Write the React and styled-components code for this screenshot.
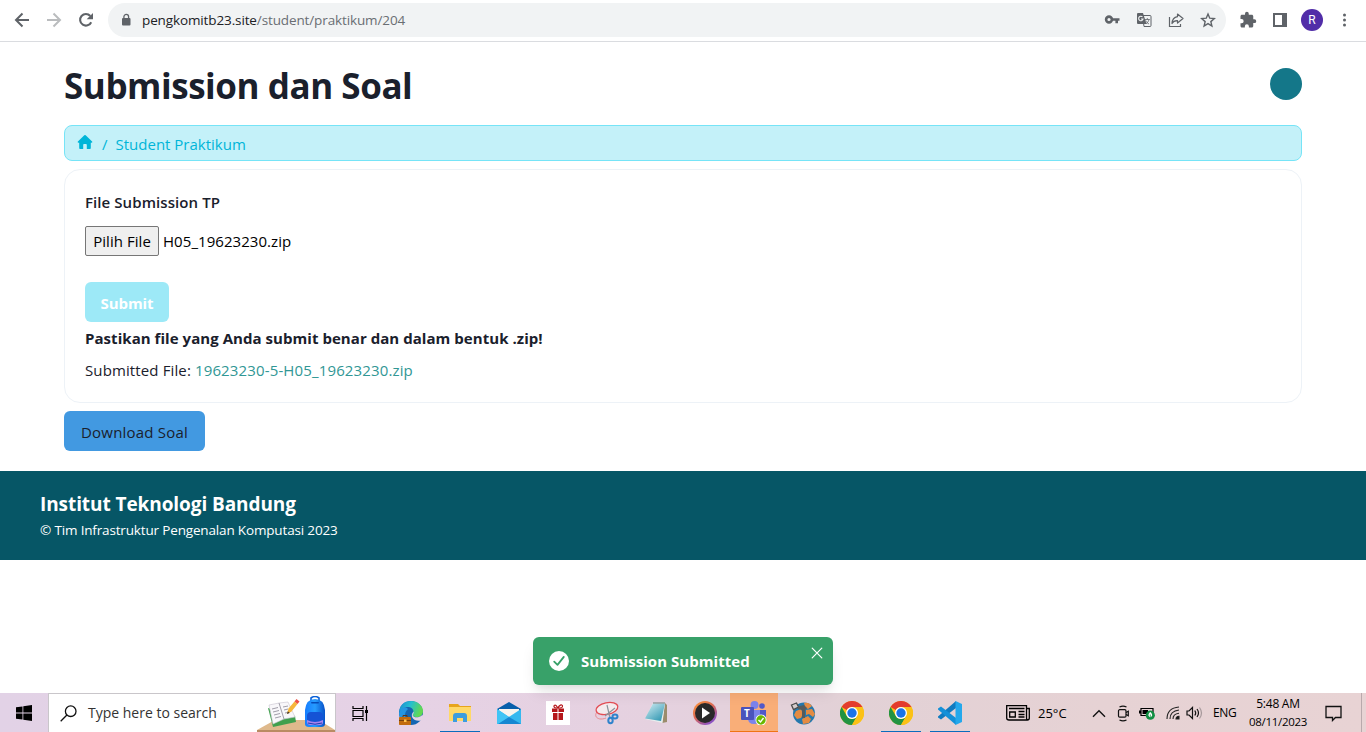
import React from "react";
import styled, { createGlobalStyle } from "styled-components";

const GlobalStyle = createGlobalStyle`
  * { box-sizing: border-box; }
  html, body { margin: 0; height: 732px; overflow: hidden; background: #fff; }
  body { font-family: "Open Sans", "Noto Sans", sans-serif; color: #1a202c; }
  svg { display: block; flex: none; }
`;

const Screen = styled.div`
  position: relative;
  width: 1366px;
  height: 732px;
  display: flex;
  flex-direction: column;
`;

const Text = styled.span`
  font-size: ${(p) => p.$size || 15}px;
  font-weight: ${(p) => p.$weight || 400};
  letter-spacing: ${(p) => p.$track || 0}px;
  color: ${(p) => p.$color || "inherit"};
  line-height: ${(p) => p.$line || 24}px;
  white-space: pre;
`;

const Toolbar = styled.header`
  height: 42px;
  flex: none;
  display: flex;
  align-items: center;
  padding: 0 13px 2px 14px;
  border-bottom: 1px solid #dadce0;
`;
const NavButtons = styled.div`
  display: flex;
  gap: 16px;
  width: 94px;
`;
const AddressBar = styled.div`
  width: 1118px;
  height: 34px;
  border-radius: 17px;
  background: #f1f3f4;
  display: flex;
  align-items: center;
  padding: 0 10px 0 12px;
`;
const Url = styled.div`
  flex: 1;
  display: flex;
  padding-left: 10px;
`;
const AddressActions = styled.div`
  display: flex;
  align-items: center;
  gap: 16px;
`;
const BrowserActions = styled.div`
  flex: 1;
  display: flex;
  align-items: center;
  padding-left: 13px;
`;
const Avatar = styled.div`
  width: 22px;
  height: 22px;
  margin: 0 12px 0 14px;
  border-radius: 50%;
  background: #512da8;
  color: #fff;
  font: 12px/22px Roboto, sans-serif;
  text-align: center;
`;

const Main = styled.main`
  flex: none;
  height: 429px;
  padding: 19px 64px 0;
  display: flex;
  flex-direction: column;
  align-items: flex-start;
`;
const TitleRow = styled.div`
  width: 100%;
  height: 64px;
  display: flex;
  justify-content: space-between;
`;
const Title = styled(Text).attrs({ as: "h1" })`
  margin: 0;
`;
const UserDot = styled.div`
  width: 32px;
  height: 32px;
  margin-top: 7px;
  border-radius: 50%;
  background: #147789;
`;
const Breadcrumb = styled.nav`
  width: 100%;
  height: 36px;
  border: 1px solid #76e4f7;
  border-radius: 8px;
  background: #c4f1f9;
  color: #00b5d8;
  display: flex;
  align-items: center;
  padding: 2px 12px 0;
`;
const Crumb = styled.div`
  display: flex;
  padding-bottom: ${(p) => p.$lift || 0}px;
  padding-right: ${(p) => p.$gap || 0}px;
`;
const Card = styled.section`
  width: 100%;
  height: 234px;
  margin: 8px 0;
  padding: 20px;
  border: 1px solid #edf2f7;
  border-radius: 16px;
  display: flex;
  flex-direction: column;
  align-items: flex-start;
`;
const FileRow = styled.div`
  display: flex;
  align-items: center;
  gap: 4px;
  margin: 12px 0 26px;
  color: #000;
`;
const FileButton = styled.div`
  width: 74px;
  height: 30px;
  border: 1px solid #767676;
  border-radius: 2px;
  background: #efefef;
  display: flex;
  align-items: center;
  justify-content: center;
`;
const Button = styled.div`
  width: ${(p) => p.$width}px;
  height: 40px;
  flex: none;
  border-radius: 6px;
  background: ${(p) => p.$bg};
  display: flex;
  align-items: center;
  justify-content: center;
  padding-top: 2px;
`;
const Line = styled.div`
  height: 24px;
  display: flex;
  align-items: center;
  margin-top: ${(p) => p.$top || 0}px;
`;
const Footer = styled.footer`
  height: 89px;
  flex: none;
  background: #065666;
  color: #fff;
  padding: 20px 40px;
  display: flex;
  flex-direction: column;
`;
const Toast = styled.div`
  position: absolute;
  left: 533px;
  top: 637px;
  width: 300px;
  height: 48px;
  border-radius: 6px;
  background: #38a169;
  color: #fff;
  box-shadow: 0 10px 15px -3px rgba(0,0,0,.1), 0 4px 6px -2px rgba(0,0,0,.05);
  display: flex;
  align-items: center;
  padding: 0 10px 0 16px;
  gap: 12px;
`;
const CloseSlot = styled.div`
  margin-left: auto;
  align-self: flex-start;
  padding-top: 10px;
`;

const Taskbar = styled.div`
  margin-top: auto;
  height: 39px;
  flex: none;
  display: flex;
  background: linear-gradient(90deg, #e2d2e6 0, #e6d2e5 420px, #e5d1df 660px, #e2d1d6 850px, #e6d2d4 1100px, #e8d3d4 100%);
`;
const Task = styled.div`
  width: 48px;
  height: 39px;
  margin-right: ${(p) => (p.$last ? 0 : 1)}px;
  display: flex;
  align-items: center;
  justify-content: center;
  background-color: ${(p) => p.$bg || "transparent"};
  background-image: ${(p) => (p.$line ? `linear-gradient(${p.$line}, ${p.$line})` : "none")};
  background-size: ${(p) => (p.$bg ? 48 : 40)}px 1px;
  background-position: center bottom;
  background-repeat: no-repeat;
  padding-top: 1px;
`;
const Search = styled.div`
  width: 288px;
  height: 39px;
  background: #fff;
  border: 1px solid #c9c6ca;
  border-bottom: 0;
  display: flex;
  align-items: center;
  gap: 11px;
  padding-left: 11px;
`;
const SearchArt = styled.div`
  margin-left: auto;
  align-self: flex-end;
`;
const Tasks = styled.div`
  display: flex;
  padding-left: 3px;
`;
const Tray = styled.div`
  flex: 1;
  display: flex;
  align-items: center;
  color: #000;
  padding: 1px 4px 0 32px;
`;
const TraySlot = styled.div`
  width: ${(p) => p.$w}px;
  flex: none;
  display: flex;
`;
const Clock = styled.div`
  width: 66px;
  margin-right: 14px;
  flex: none;
  display: flex;
  flex-direction: column;
  align-items: center;
`;
const DeskEdge = styled.div`
  width: 1px;
  height: 39px;
  margin-left: auto;
  margin-top: -1px;
  background: #b9a9ac;
`;

const BackIcon = () => (
  <svg width="16" height="16" viewBox="0 0 16 16" fill="none" stroke="#5f6368" strokeWidth="2"><path d="M15 8H2.5M8.5 1.5 2 8l6.5 6.5" /></svg>
);
const ForwardIcon = () => (
  <svg width="16" height="16" viewBox="0 0 16 16" fill="none" stroke="#babcbe" strokeWidth="2"><path d="M1 8h12.5M7.5 1.5 14 8l-6.5 6.5" /></svg>
);
const ReloadIcon = () => (
  <svg width="16" height="16" viewBox="0 0 16 16"><path d="M13.2 10.200A5.800 5.800 0 1 1 12.300 4" fill="none" stroke="#5f6368" strokeWidth="2.100" /><path d="M15 1v6.300H8.700z" fill="#5f6368" /></svg>
);
const LockIcon = () => (
  <svg width="12" height="14" viewBox="0 0 12 14"><rect x="2" y="5" width="8.500" height="7.500" rx="1" fill="#5f6368" /><path d="M3.900 5.500V3.800a2.350 2.350 0 0 1 4.700 0v1.700" fill="none" stroke="#5f6368" strokeWidth="1.300" /></svg>
);
const KeyIcon = () => (
  <svg width="16" height="16" viewBox="0 0 16 16"><circle cx="5" cy="7.500" r="2.900" fill="none" stroke="#5f6368" strokeWidth="2.600" /><path d="M8 6.300h7.500v2.500h-1.500v2.400h-2.600V8.800H8z" fill="#5f6368" /></svg>
);
const TranslateIcon = () => (
  <svg width="16" height="16" viewBox="0 0 16 16"><path d="M6.500 3.500H14a1 1 0 0 1 1 1v9a1 1 0 0 1-1 1H8z" fill="#f1f3f4" stroke="#5f6368" /><path d="M2 1h5l3.500 11H2a1 1 0 0 1-1-1V2a1 1 0 0 1 1-1z" fill="#5f6368" /><path d="M6.500 5A2.200 2.200 0 1 0 7 7H5" fill="none" stroke="#f1f3f4" strokeWidth="1.100" /><path d="M8.800 7.500h5M11.300 6v1.500M13 7.500c-.5 2-1.700 3.500-3 4.300M9.800 8.500c.5 1.500 1.600 2.700 3.200 3.500" fill="none" stroke="#5f6368" strokeWidth=".8" /></svg>
);
const ShareIcon = () => (
  <svg width="16" height="16" viewBox="0 0 16 16" fill="none" stroke="#5f6368" strokeWidth="1.200"><path d="M1.500 5v9.500h11V12" /><path d="M9.500 2 15 6.500 9.500 11V8.600C6.700 8.500 5 9.500 4 11.500c.2-3.600 2-6.200 5.500-6.800z" strokeLinejoin="round" /></svg>
);
const StarIcon = () => (
  <svg width="16" height="16" viewBox="0 0 16 16" fill="none" stroke="#5f6368" strokeWidth="1.400"><path d="m8 2 1.750 4.200 4.550.4-3.450 3 1.050 4.450L8 11.650l-3.900 2.400L5.150 9.600l-3.450-3 4.550-.4z" /></svg>
);
const PuzzleIcon = () => (
  <svg width="18" height="18" viewBox="0 0 24 24" fill="#5f6368"><path d="M20.500 11H19V7c0-1.100-.9-2-2-2h-4V3.500a2.500 2.500 0 0 0-5 0V5H4c-1.100 0-2 .9-2 2v3.800h1.500a2.700 2.700 0 0 1 0 5.400H2V20c0 1.100.9 2 2 2h3.800v-1.500a2.700 2.700 0 0 1 5.400 0V22H17c1.100 0 2-.9 2-2v-4h1.500a2.500 2.500 0 0 0 0-5z" /></svg>
);
const PanelSlot = styled.div`
  padding-left: 16px;
`;
const PanelIcon = () => (
  <svg width="14" height="14" viewBox="0 0 14 14"><path fill="#5f6368" fillRule="evenodd" d="M0 0h14v14H0zM2 2v10h7V2z" /></svg>
);
const MenuIcon = () => (
  <svg width="18" height="18" viewBox="0 0 18 18" fill="#5f6368"><circle cx="9.500" cy="4" r="1.500" /><circle cx="9.500" cy="9" r="1.500" /><circle cx="9.500" cy="14" r="1.500" /></svg>
);
const HomeIcon = () => (
  <svg width="16" height="16" viewBox="0 0 16 16" fill="#00b5d8"><path d="M15.100 7.600 8.700 1.300a1 1 0 0 0-1.400 0L.9 7.600c-.6.600-.2 1.200.6 1.200H2.200v4.900c0 .9.400 1.200 1 1.200h3V11c0-.7.500-1 1-1h1.600c.5 0 1 .3 1 1v3.900h3c.6 0 1-.3 1-1.200V8.800h.7c.8 0 1.200-.6.600-1.200z" /></svg>
);
const CheckIcon = () => (
  <svg width="20" height="20" viewBox="0 0 20 20"><circle cx="10" cy="10" r="10" fill="#fff" /><path d="m5.200 10.600 3.300 3.300 6.300-8" fill="none" stroke="#38a169" strokeWidth="1.800" strokeLinecap="round" strokeLinejoin="round" /></svg>
);
const CloseIcon = () => (
  <svg width="12" height="12" viewBox="0 0 12 12" stroke="#fff" strokeWidth="1.200" strokeLinecap="round"><path d="m1.200 1.200 9.600 9.600m0-9.600-9.600 9.600" /></svg>
);

const WindowsIcon = () => (
  <svg width="16" height="16" viewBox="0 0 16 16"><path d="M0 2.300 6.500 1.400V7.600H0zM7.300 1.300 16 0v7.600H7.300zM0 8.400h6.500v6.200L0 13.700zM7.300 8.400H16V16l-8.700-1.300z" /></svg>
);
const SearchIcon = () => (
  <svg width="17" height="17" viewBox="0 0 17 17" fill="none" stroke="#111" strokeWidth="1.300"><circle cx="10.700" cy="6.200" r="5.300" /><path d="M6.900 10 .7 16.300" /></svg>
);
const SchoolArt = () => (
  <svg width="78" height="36" viewBox="0 0 78 36">
    <defs><linearGradient id="bag" x2="1"><stop stopColor="#167dff" /><stop offset=".5" stopColor="#269cff" /><stop offset="1" stopColor="#0750c8" /></linearGradient></defs>
    <path d="M0 34 18 24h44l16 10z" fill="#dfb98c" /><path d="M0 34h78v2H0z" fill="#b98b63" />
    <path d="m11 12 5 19 23-5-1-6z" fill="#3fa04d" /><path d="m12 9 10-2 9-1 7 15-11 2-11 5z" fill="#f8f7fa" stroke="#c7c3cf" strokeWidth=".6" />
    <path d="m22 7 5 16M15 13l6-1.500M16 16l6-1.500M17 19l6-1.500M18 22l6-1.500M26 11l5-1M27 14l4-1M28 17l5-1" stroke="#8a8794" strokeWidth=".8" fill="none" />
    <path d="m30 18 1.500-5.500 6-7 3 2.500-6 7.500z" fill="#f6b73b" /><path d="m37.500 5.500 2-2.500 3 2.500-2 2.500z" fill="#ef5145" /><path d="m30 18 .8-2.700 1.900 1.600z" fill="#40332c" />
    <path d="M54 5V2q4-3 8 0v3" fill="none" stroke="#0b61d8" strokeWidth="1.600" />
    <path d="M48 14Q49 3 58 3t10 11v14q0 3-4 3H52q-4 0-4-3z" fill="url(#bag)" /><rect x="54" y="6" width="8" height="1.600" rx=".8" fill="#064bb8" />
    <path d="M50 20q0-4 4-4h8q4 0 4 4v6q0 3-3 3H53q-3 0-3-3z" fill="#1553d5" /><path d="M50 24q8 4 16 0v2q0 3-3 3H53q-3 0-3-3z" fill="#a783ef" /><path d="M51 27q7 2.500 14 0" stroke="#1c3fb0" fill="none" />
  </svg>
);
const TaskViewIcon = () => (
  <svg width="17" height="17" viewBox="0 0 17 17" fill="none" stroke="#000" strokeWidth="1.200"><path d="M1 1v2.500h10V1M1 16v-2.500h10V16M1 5.500h10v6H1zM14.500 1v15" /><path d="M13 5h3v3h-3z" fill="#000" stroke="none" /></svg>
);
const EdgeIcon = () => (
  <svg width="26" height="26" viewBox="0 0 26 26">
    <defs><linearGradient id="wave" x2="1" y2=".3"><stop stopColor="#1786d2" /><stop offset=".5" stopColor="#25bfd0" /><stop offset="1" stopColor="#61d852" /></linearGradient></defs>
    <circle cx="13" cy="13" r="12" fill="#1465b2" />
    <path d="M1 12C2 4 7 1 13 1c7 0 12 5 12 10 0 4-3 6-6 6-4 0-5-2-4-3 1-2 1-6-4-7-4-.5-8 2-10 5z" fill="url(#wave)" />
    <path d="M15.500 11.500c1 1.500-1 3-.8 3.700.3 1.500 2.300 2.300 5.300 2 2-.3 3.500-1.500 4.500-2.700L26 20l-3 .5c-7 1.500-12-4-7.500-9z" fill="#e5d3e4" /><path d="M10 9c-5 4-4 13 3 16C6 25 1 19 1 13c1-5 6-7 9-4z" fill="#2495df" />
    <path d="M5 17v-1.500h4V17" stroke="#653711" fill="none" /><rect x="1" y="17" width="12" height="8" rx=".8" fill="#c16b0d" /><path d="M1 20.500h12" stroke="#75400b" /><rect x="6" y="19.500" width="2.500" height="2.500" fill="#ffc34c" />
  </svg>
);
const FolderIcon = () => (
  <svg width="22" height="20" viewBox="0 0 22 20"><path d="M0 1h9l2 2h11v15H0z" fill="#e7a51c" /><path d="M0 4h22v14H0z" fill="#ffd968" /><path d="M4 19v-6q0-3 3-3h8q3 0 3 3v6h-4v-4H8v4z" fill="#3c9ddf" /></svg>
);
const MailIcon = () => (
  <svg width="24" height="24" viewBox="0 0 24 24"><path d="M0 8 12 1l12 7v15H0z" fill="#075fab" /><path d="M2 8h20v8H2z" fill="#f7f4ee" /><path d="m0 8 12 8 12-8v15H0z" fill="#35b8ef" /><path d="M0 8v15h2L24 8.500 12 16z" fill="#40c4f5" /><path d="M12 16 24 23H1z" fill="#1687d2" /></svg>
);
const GiftIcon = () => (
  <svg width="24" height="24" viewBox="0 0 24 24"><path d="M0 0h24v24H0z" fill="#fff" /><path d="M6 7.500h5.500V11H6zM12.500 7.500H18V11h-5.500zM7 12h4.500v7H7zM12.500 12H17v7h-4.500z" fill="#b5171b" /><path d="M11.500 7C6 7 8 3 10 4.500L12 7c1-3 4-4 4.500-2S14 7 12 7z" fill="none" stroke="#b5171b" strokeWidth="1.200" /></svg>
);
const SnipIcon = () => (
  <svg width="24" height="24" viewBox="0 0 24 24" fill="none"><path d="M2 11c-4 5 2 9 9 6" stroke="#e88a90" /><ellipse cx="12" cy="7.500" rx="11" ry="5.800" transform="rotate(-12 12 7.500)" fill="#f4ebed" stroke="#e34d54" strokeWidth="1.300" /><path d="m12 4 3 13M20 7l-10 8" stroke="#8a949b" strokeWidth="1.200" /><ellipse cx="15.500" cy="19.500" rx="2.200" ry="2.800" stroke="#2f83cc" strokeWidth="2" /><ellipse cx="20" cy="15.500" rx="2.500" ry="1.900" stroke="#2f83cc" strokeWidth="2" /></svg>
);
const NotepadIcon = () => (
  <svg width="24" height="24" viewBox="0 0 24 24"><defs><linearGradient id="note" x2=".8" y2="1"><stop stopColor="#d5eff4" /><stop offset="1" stopColor="#3298b3" /></linearGradient></defs><path d="m21 2 2 2v17l-5 1z" fill="#9b8c6c" /><path d="M9 2h12l-2.500 20L1 18z" fill="#e8eeee" /><path d="M9 2.500h12L17 20 1 17.500z" fill="url(#note)" /><path d="M9 2h12" stroke="#889496" strokeWidth="1.300" /></svg>
);
const MediaIcon = () => (
  <svg width="24" height="24" viewBox="0 0 24 24"><defs><linearGradient id="ring" x2=".7" y2="1"><stop stopColor="#ff9b37" /><stop offset=".5" stopColor="#dd6b55" /><stop offset="1" stopColor="#8650ce" /></linearGradient></defs><circle cx="12" cy="12" r="12" fill="url(#ring)" /><circle cx="12" cy="12" r="10" fill="#292929" /><path d="m9 6.500 8 5.500-8 5.500z" fill="#fff" /></svg>
);
const TeamsLetter = styled.b`
  font: 700 10px/13px "Open Sans", sans-serif;
  color: #fff;
  position: absolute;
  left: 3px;
  top: 6px;
`;
const TeamsWrap = styled.div`
  position: relative;
  width: 26px;
  height: 24px;
`;
const TeamsIcon = () => (
  <TeamsWrap>
    <svg width="26" height="24" viewBox="0 0 26 24"><circle cx="21" cy="5" r="2.800" fill="#5059c9" /><circle cx="13.500" cy="4" r="4" fill="#7b83eb" /><path d="M17 9h8v7q0 4-4 4h-4z" fill="#5059c9" /><path d="M7 9h12v8q0 6-6 6t-6-6z" fill="#7b83eb" /><rect y="6" width="13" height="13" rx="1" fill="#4b53bc" /><circle cx="20" cy="19" r="5.500" fill="#fff" /><circle cx="20" cy="19" r="4.700" fill="#6bb700" /><path d="m17.500 19 2 2 3-4" fill="none" stroke="#fff" strokeWidth="1.400" /></svg>
    <TeamsLetter>T</TeamsLetter>
  </TeamsWrap>
);
const GlobeIcon = () => (
  <svg width="26" height="24" viewBox="0 0 26 24"><circle cx="14" cy="12.500" r="11" fill="#2478ad" /><path d="M14 2c3-1 6 0 8 3l-4 3-3-2zM6 10l5-2 2 5-2 4-4 1-3-4zM16 9l6-1 3 5-2 3-4-3-3 1zM12 18l6-3 3 3-2 4-6 1z" fill="#e48b42" /><path d="m1.500 4 5-2 2 4-5 2.500z" fill="#d4cccc" stroke="#4b4b4b" strokeWidth="1.300" /><path d="M8 5.500 14 4l3 3-2 2v8h-3V9L8 8z" fill="#555b5c" /></svg>
);
const ChromeIcon = () => (
  <svg width="24" height="24" viewBox="0 0 24 24"><circle cx="12" cy="12" r="12" fill="#fbc116" /><path d="M1.600 6A12 12 0 0 1 22.400 6H12a6 6 0 0 0-5.200 3z" fill="#e33b2e" /><path d="M1.600 6A12 12 0 0 0 12 24l5.200-9A6 6 0 0 1 6.800 15z" fill="#229342" /><path d="M22.400 6H12l5.200 9L12 24A12 12 0 0 0 22.400 6z" fill="#fbc116" /><circle cx="12" cy="12" r="6" fill="#fff" /><circle cx="12" cy="12" r="4.700" fill="#1a73e8" /></svg>
);
const CodeIcon = () => (
  <svg width="24" height="24" viewBox="0 0 24 24"><path d="M18 0v7L3 18.500 0 16.500v-1z" fill="#117bc0" /><path d="M18 24v-7L3 5.500 0 7.500v1z" fill="#1490d8" /><path d="m17.500 0 6.500 3v18l-6.500 3z" fill="#24a8ec" /></svg>
);
const NewsIcon = () => (
  <svg width="24" height="16" viewBox="0 0 24 16" fill="none" stroke="#000" strokeWidth="1.300"><path d="M20.500 3.500h2.800v9.500q0 2-2 2H3Q.7 15 .7 13V.7h19.800V13q0 2 1.500 2M3 3.500h15.500M12.500 6.500h6M12.500 9.500h6M12.500 12h6" /><path d="M3.700 7h5.600v5H3.700z" /></svg>
);
const ChevronIcon = () => (
  <svg width="14" height="9" viewBox="0 0 14 9" fill="none" stroke="#111" strokeWidth="1.400"><path d="m1 7.700 6-6 6 6" /></svg>
);
const MeetIcon = () => (
  <svg width="14" height="17" viewBox="0 0 14 17" fill="none" stroke="#111" strokeWidth="1.200"><rect x="1.500" y="4.700" width="7.500" height="7.500" rx="1.200" /><path d="m9 7.500 2.300-1.300v4.600L9 9.500M2.500 2Q6 .2 9.500 2M2.500 15q3.500 1.800 7 0" /></svg>
);
const BatteryIcon = () => (
  <svg width="16" height="14" viewBox="0 0 16 14"><path d="M2 2.500h12v7H2z" fill="none" stroke="#000" strokeWidth="1.200" /><path d="M0 4.500h2v3H0zM3.500 4H9v4H3.500z" /><circle cx="11.300" cy="9.200" r="4.600" fill="#129044" /><path d="M11.300 6c2.700 2.300 2.300 4.300 0 5.300-2.300-1-2.700-3 0-5.300z" fill="#fff" /><path d="M11.300 8.500V13" stroke="#129044" strokeWidth=".8" /></svg>
);
const WifiIcon = () => (
  <svg width="14" height="14" viewBox="0 0 14 14" fill="none" stroke="#222" strokeWidth="1.100"><path d="M1 13Q1 2 13 1M4 13Q4 5 13 4M7 13Q7 8 13 7.300" /><path d="M10 13q0-2.500 3-2.700V13z" fill="#111" /></svg>
);
const VolumeIcon = () => (
  <svg width="17" height="14" viewBox="0 0 17 14" fill="none" stroke="#111" strokeWidth="1.200"><path d="M1 5h2l3.500-3.500v11L3 9H1zM8.800 4.500q1.800 2.500 0 5M11 3q3 4 0 8" /><path d="M13.500 1.500q4 5.500 0 11" stroke="#a79a9c" /></svg>
);
const NoticeIcon = () => (
  <svg width="17" height="17" viewBox="0 0 17 17" fill="none" stroke="#111" strokeWidth="1.300"><path d="M1 1.500h15v11h-5.500l-3 3v-3H1z" /></svg>
);

export default function App() {
  return (
    <Screen>
      <GlobalStyle />
      <Toolbar>
        <NavButtons><BackIcon /><ForwardIcon /><ReloadIcon /></NavButtons>
        <AddressBar>
          <LockIcon />
          <Url>
            <Text $size={13.5} $track={-0.12} $color="#202124">pengkomitb23.site</Text>
            <Text $size={13.5} $track={-0.12} $color="#6a6e73">/student/praktikum/204</Text>
          </Url>
          <AddressActions><KeyIcon /><TranslateIcon /><ShareIcon /><StarIcon /></AddressActions>
        </AddressBar>
        <BrowserActions>
          <PuzzleIcon />
          <PanelSlot><PanelIcon /></PanelSlot>
          <Avatar>R</Avatar>
          <MenuIcon />
        </BrowserActions>
      </Toolbar>

      <Main>
        <TitleRow><Title $size={35} $track={-0.45} $weight={700} $line={49}>Submission dan Soal</Title><UserDot /></TitleRow>
        <Breadcrumb>
          <Crumb $lift={4} $gap={9}><HomeIcon /></Crumb>
          <Crumb $gap={8}><Text>/</Text></Crumb>
          <Text>Student Praktikum</Text>
        </Breadcrumb>
        <Card>
          <Text $weight={600} $track={0.08}>File Submission TP</Text>
          <FileRow><FileButton><Text $track={0.05}>Pilih File</Text></FileButton><Text $track={0.06}>H05_19623230.zip</Text></FileRow>
          <Button $width={84} $bg="#9de9f7"><Text $weight={700} $track={-0.1} $color="#fff">Submit</Text></Button>
          <Line $top={4}><Text $weight={700} $track={0.05}>Pastikan file yang Anda submit benar dan dalam bentuk .zip!</Text></Line>
          <Line $top={8}><Text $track={0.12}>Submitted File: </Text><Text $track={0.14} $color="#319795">19623230-5-H05_19623230.zip</Text></Line>
        </Card>
        <Button $width={141} $bg="#4299e1"><Text $weight={500} $track={0.2}>Download Soal</Text></Button>
      </Main>

      <Footer>
        <Text $size={19} $track={-0.08} $weight={700} $line={27}>Institut Teknologi Bandung</Text>
        <Text $size={13.5} $track={-0.16} $line={24}>© Tim Infrastruktur Pengenalan Komputasi 2023</Text>
      </Footer>

      <Taskbar>
        <Task $last><WindowsIcon /></Task>
        <Search><SearchIcon /><Text $size={14} $color="#333">Type here to search</Text><SearchArt><SchoolArt /></SearchArt></Search>
        <Task $last><TaskViewIcon /></Task>
        <Tasks>
          <Task><EdgeIcon /></Task>
          <Task $line="#0b6cbd"><FolderIcon /></Task>
          <Task><MailIcon /></Task>
          <Task><GiftIcon /></Task>
          <Task><SnipIcon /></Task>
          <Task><NotepadIcon /></Task>
          <Task><MediaIcon /></Task>
          <Task $bg="#f9ae78" $line="#ef7414"><TeamsIcon /></Task>
          <Task><GlobeIcon /></Task>
          <Task><ChromeIcon /></Task>
          <Task $line="#0b6cbd"><ChromeIcon /></Task>
          <Task $last $line="#0b6cbd"><CodeIcon /></Task>
        </Tasks>
        <Tray>
          <TraySlot $w={32}><NewsIcon /></TraySlot>
          <TraySlot $w={54}><Text $size={13}>25°C</Text></TraySlot>
          <TraySlot $w={25}><ChevronIcon /></TraySlot>
          <TraySlot $w={22}><MeetIcon /></TraySlot>
          <TraySlot $w={27}><BatteryIcon /></TraySlot>
          <TraySlot $w={20}><WifiIcon /></TraySlot>
          <TraySlot $w={27}><VolumeIcon /></TraySlot>
          <TraySlot $w={32}><Text $size={12} $track={-0.3}>ENG</Text></TraySlot>
          <Clock><Text $size={12} $track={-0.25} $line={18}>5:48 AM</Text><Text $size={11.5} $track={-0.28} $line={18}>08/11/2023</Text></Clock>
          <TraySlot $w={17}><NoticeIcon /></TraySlot>
          <DeskEdge />
        </Tray>
      </Taskbar>

      <Toast><CheckIcon /><Text $weight={700} $track={0.05}>Submission Submitted</Text><CloseSlot><CloseIcon /></CloseSlot></Toast>
    </Screen>
  );
}
